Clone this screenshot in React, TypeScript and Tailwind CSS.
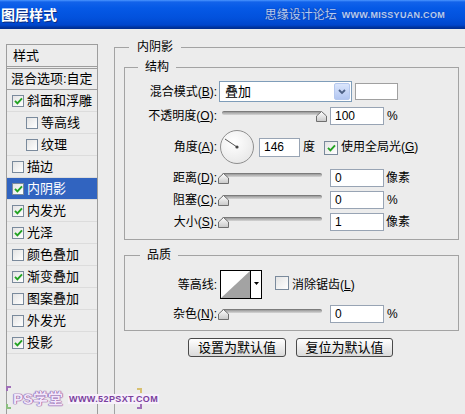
import clsx from 'clsx'

const FONT = "font-['Liberation_Sans','Noto_Sans_CJK_SC',sans-serif]"

const STYLE_ROWS = [
  { label: '斜面和浮雕', checked: true },
  { label: '等高线', checked: false, indent: true },
  { label: '纹理', checked: false, indent: true },
  { label: '描边', checked: false },
  { label: '内阴影', checked: true, selected: true },
  { label: '内发光', checked: true },
  { label: '光泽', checked: true },
  { label: '颜色叠加', checked: false },
  { label: '渐变叠加', checked: true },
  { label: '图案叠加', checked: false },
  { label: '外发光', checked: false },
  { label: '投影', checked: true },
]

function Checkbox({ checked, big }: { checked: boolean; big?: boolean }) {
  return (
    <span
      className={clsx(
        'inline-flex shrink-0 items-center justify-center border border-[#7a8a9c] bg-gradient-to-br from-[#e4e4e4] to-white',
        big ? 'h-[14px] w-[14px]' : 'h-[12px] w-[12px]'
      )}
    >
      {checked && (
        <svg width="9" height="8" viewBox="0 0 9 8">
          <path d="M1 3.8 L3.4 6.3 L8 1.3" stroke="#22a322" strokeWidth="1.9" fill="none" />
        </svg>
      )}
    </span>
  )
}

function StyleRow({ label, checked, indent, selected }: { label: string; checked: boolean; indent?: boolean; selected?: boolean }) {
  return (
    <div
      className={clsx(
        'flex h-[22px] items-center border-b border-[#dcdcdc] text-[13px] leading-[16px]',
        selected ? 'bg-[#3164c0] text-white' : 'text-black',
        indent ? 'pl-[19px]' : 'pl-[5px]'
      )}
    >
      <Checkbox checked={checked} />
      <span className="ml-[3px]">{label}</span>
    </div>
  )
}

function Label({ children }: { children: React.ReactNode }) {
  return <div className="w-[92px] shrink-0 text-right text-[12px] leading-[16px] text-black">{children}</div>
}

function Slider({ atEnd }: { atEnd?: boolean }) {
  return (
    <div className="relative ml-[1px] h-[20px] w-[110px] shrink-0">
      <div className="absolute left-[4px] top-[5px] h-[4px] w-[100px] rounded-full border-t border-[#7b7b7b] bg-gradient-to-b from-[#9a9a9a] to-[#d6d6d6]" />
      <svg
        className={clsx('absolute top-[5px]', atEnd ? 'left-[98px]' : 'left-[0px]')}
        width="11"
        height="11"
        viewBox="0 0 11 11"
      >
        <defs>
          <linearGradient id="thumb" x1="0" y1="0" x2="0" y2="1">
            <stop offset="0" stopColor="#ffffff" />
            <stop offset="1" stopColor="#c8c8c8" />
          </linearGradient>
        </defs>
        <path d="M5.5 0.5 L10.5 5 L10.5 10.5 L0.5 10.5 L0.5 5 Z" fill="url(#thumb)" stroke="#6f6f6f" />
      </svg>
    </div>
  )
}

function NumBox({ value, className }: { value: string; className?: string }) {
  return (
    <div
      className={clsx(
        'flex h-[18px] shrink-0 items-center border border-[#98a4b4] bg-white pl-[4px] text-[12px] leading-[14px] text-black',
        className ?? 'ml-[2px] w-[54px]'
      )}
    >
      {value}
    </div>
  )
}

function Dial() {
  return (
    <div className="ml-[3px] h-[34px] w-[34px] shrink-0 rounded-full border border-[#8f8f8f] bg-[radial-gradient(circle_at_40%_35%,#ffffff,#e2e2e2)]">
      <svg width="32" height="32" viewBox="0 0 32 32">
        <line x1="16" y1="16" x2="4" y2="8" stroke="#555" strokeWidth="1" />
        <circle cx="16" cy="16" r="1.6" fill="#444" />
      </svg>
    </div>
  )
}

function ContourPicker() {
  return (
    <div className="ml-[3px] flex h-[29px] shrink-0">
      <div className="h-[29px] w-[31px] border border-black bg-white">
        <svg width="29" height="27" viewBox="0 0 29 27">
          <polygon points="0,27 29,0 29,27" fill="#a3a3a3" />
        </svg>
      </div>
      <div className="flex h-[29px] w-[11px] justify-center border border-l-0 border-black bg-white pt-[11px]">
        <svg width="5" height="3" viewBox="0 0 5 3">
          <polygon points="0,0 5,0 2.5,3" fill="#000" />
        </svg>
      </div>
    </div>
  )
}

function Button({ children, className }: { children: React.ReactNode; className?: string }) {
  return (
    <div
      className={clsx(
        'flex h-[19px] items-center justify-center rounded-[3px] border border-[#4a4a4a] bg-gradient-to-b from-white to-[#dadada] text-[13px] leading-[16px] text-black',
        className
      )}
    >
      {children}
    </div>
  )
}

export default function App() {
  return (
    <div className={clsx('relative h-[414px] w-[465px] overflow-hidden bg-[#ececec]', FONT)}>
      {/* title bar */}
      <div className="flex h-[29px] items-center justify-between bg-[linear-gradient(to_bottom,#4b95ff_0px,#1262ea_2px,#0559e6_8px,#0251dc_18px,#0046cc_25px,#002f94_28px)] pl-[1px] pr-[20px]">
        <span className="text-[14px] font-bold leading-[18px] text-white [text-shadow:1px_1px_0_#0b2c80]">图层样式</span>
        <div className="flex items-center gap-[5px]">
          <span className="text-[12px] leading-[16px] text-[#b5ccf3] [text-shadow:0_0_1px_#1a3d99,0_0_1px_#1a3d99]">思缘设计论坛</span>
          <span className="text-[9px] font-bold leading-[10px] tracking-[0.3px] text-[#b5ccf3] [text-shadow:0_0_1px_#1a3d99]">WWW.MISSYUAN.COM</span>
        </div>
      </div>

      <div className="flex">
        {/* left list */}
        <div className="ml-[6px] mt-[15px] h-[380px] w-[92px] shrink-0 border-x border-t border-[#9d9d9d]">
          <div className="flex h-[24px] items-center border-b-[3px] border-double border-[#9d9d9d] pl-[6px] text-[13px] leading-[16px]">样式</div>
          <div className="flex h-[21px] items-center border-b border-[#9d9d9d] pl-[4px] text-[13px] leading-[16px]">混合选项:自定</div>
          {STYLE_ROWS.map((r) => (
            <StyleRow key={r.label} {...r} />
          ))}
        </div>

        {/* right settings */}
        <fieldset className="ml-[16px] mt-[10px] min-w-0 flex-1 border-l border-t border-[#a3a3a3]">
          <legend className="ml-[14px] px-[8px] text-[12px] leading-[16px]">内阴影</legend>

          <fieldset className="ml-[9px] mt-[4px] w-[335px] border border-[#a3a3a3] pb-[6px]">
            <legend className="ml-[13px] px-[7px] text-[12px] leading-[16px]">结构</legend>

            <div className="mt-[6px] flex h-[21px] items-center">
              <Label>
                混合模式(<u>B</u>):
              </Label>
              <div className="ml-[2px] flex h-[21px] w-[133px] items-center justify-between border border-[#7f9db9] bg-white pl-[5px] pr-[1px] text-[13px] leading-[16px]">
                <span>叠加</span>
                <div className="flex h-[17px] w-[16px] items-center justify-center rounded-[2px] border border-[#b5c8ee] bg-gradient-to-b from-[#dbe6fc] to-[#b2c6f1]">
                  <svg width="8" height="6" viewBox="0 0 8 6">
                    <path d="M1 1 L4 4 L7 1" stroke="#4d6185" strokeWidth="1.8" fill="none" />
                  </svg>
                </div>
              </div>
              <div className="ml-[3px] h-[17px] w-[43px] border border-[#a0a0a0] bg-white" />
            </div>

            <div className="mt-[4px] flex h-[20px] items-center">
              <Label>
                不透明度(<u>O</u>):
              </Label>
              <Slider atEnd />
              <NumBox value="100" />
              <span className="ml-[3px] text-[12px]">%</span>
            </div>

            <div className="mt-[4px] flex h-[34px] items-center">
              <Label>
                角度(<u>A</u>):
              </Label>
              <Dial />
              <NumBox value="146" className="ml-[5px] h-[19px] w-[41px]" />
              <span className="ml-[3px] text-[12px] leading-[16px]">度</span>
              <span className="ml-[9px]">
                <Checkbox checked big />
              </span>
              <span className="ml-[3px] text-[12px] leading-[16px]">
                使用全局光(<u>G</u>)
              </span>
            </div>

            <div className="mt-[3px] flex h-[22px] items-center">
              <Label>
                距离(<u>D</u>):
              </Label>
              <Slider />
              <NumBox value="0" />
              <span className="ml-[2px] text-[12px] leading-[16px]">像素</span>
            </div>
            <div className="flex h-[22px] items-center">
              <Label>
                阻塞(<u>C</u>):
              </Label>
              <Slider />
              <NumBox value="0" />
              <span className="ml-[3px] text-[12px]">%</span>
            </div>
            <div className="flex h-[22px] items-center">
              <Label>
                大小(<u>S</u>):
              </Label>
              <Slider />
              <NumBox value="1" />
              <span className="ml-[2px] text-[12px] leading-[16px]">像素</span>
            </div>
          </fieldset>

          <fieldset className="ml-[9px] mt-[7px] w-[335px] border border-[#a3a3a3] pb-[6px]">
            <legend className="ml-[15px] px-[7px] text-[12px] leading-[16px]">品质</legend>

            <div className="mt-[7px] flex h-[29px] items-center">
              <Label>等高线:</Label>
              <ContourPicker />
              <span className="ml-[13px]">
                <Checkbox checked={false} big />
              </span>
              <span className="ml-[3px] text-[12px] leading-[16px]">
                消除锯齿(<u>L</u>)
              </span>
            </div>

            <div className="mt-[5px] flex h-[20px] items-center">
              <Label>
                杂色(<u>N</u>):
              </Label>
              <Slider />
              <NumBox value="0" />
              <span className="ml-[3px] text-[12px]">%</span>
            </div>
          </fieldset>

          <div className="mt-[7px] flex">
            <Button className="ml-[73px] w-[98px]">设置为默认值</Button>
            <Button className="ml-[10px] w-[97px]">复位为默认值</Button>
          </div>
        </fieldset>
      </div>

      {/* watermark */}
      <div className="absolute left-[6px] top-[386px] h-[5px] w-[5px] border-l-2 border-t-2 border-[#a070b8]" />
      <div className="absolute left-[6px] top-[404px] h-[5px] w-[5px] border-b-2 border-l-2 border-[#8cc080]" />
      <div className="absolute left-[137px] top-[388px] h-[5px] w-[5px] border-r-2 border-t-2 border-[#d8c070]" />
      <div className="absolute left-[137px] top-[404px] h-[5px] w-[5px] border-b-2 border-r-2 border-[#a070b8]" />
      <div className="absolute left-[13px] top-[390px] flex items-center gap-[5px]">
        <span className="text-[15px] font-bold leading-[17px] text-[#f3e6fa] [text-shadow:0_0_1px_#7a3f9e,0_0_1px_#7a3f9e,0_0_1px_#7a3f9e]">PS学堂</span>
        <span className="bg-[#f7f0fa] px-[1px] text-[9px] font-bold leading-[10px] tracking-[0.4px] text-[#7a3f9e]">WWW.52PSXT.COM</span>
      </div>
    </div>
  )
}
